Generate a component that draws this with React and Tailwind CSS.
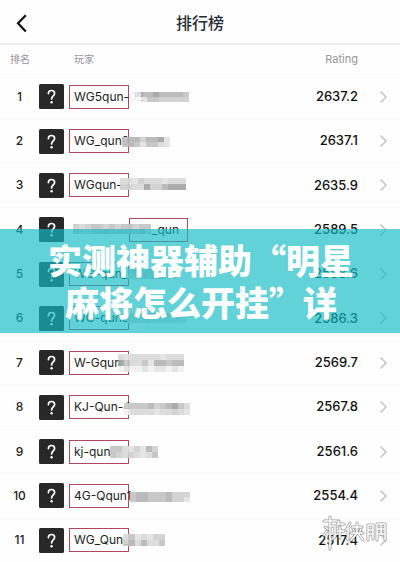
import React from "react";

// mosaic: offset inside the player column, block height h, then one string of
// shades per line of blocks (index into SHADES)
const PLAYERS = [
  { rank: 1, name: "WG5qun-", tail: "02", rating: "2637.2", mosaic: { x: 60, y: 7, h: 5, rows: ["7155655554", "7714433333"] } },
  { rank: 2, name: "WG_qun9", rating: "2637.1", mosaic: { x: 53, y: 8, h: 5, rows: ["45535561", "45414421"] } },
  { rank: 3, name: "WGqun-", rating: "2635.9", mosaic: { x: 51, y: 5, h: 6, rows: ["22132221222", "33226335666"] } },
  { rank: 4, name: "_qun", before: true, rating: "2589.5", mosaic: { x: 4, y: 6, h: 5, rows: ["3234434344344", "4334454444453"] } },
  { rank: 5, name: "WG-qun_", rating: "2588.6", mosaic: { x: 59, y: 7, h: 5, rows: ["34343531", "23434321"] } },
  { rank: 6, name: "WG-qun5", rating: "2586.3", mosaic: { x: 58, y: 7, h: 5, rows: ["3333333231", "2323222221"] } },
  { rank: 7, name: "W-Gqun", rating: "2569.7", mosaic: { x: 49, y: 3, h: 6, rows: ["21222221222", "64224155455", "01001011010"] } },
  { rank: 8, name: "KJ-Qun-4", rating: "2567.8", mosaic: { x: 55, y: 8, h: 6, rows: ["34445345642", "02222122321"] } },
  { rank: 9, name: "kj-qun", rating: "2561.6", mosaic: { x: 41, y: 6, h: 6, rows: ["44213153", "43232124"] } },
  { rank: 10, name: "4G-Qqun1", rating: "2554.4", mosaic: { x: 61, y: 8, h: 5, rows: ["4554445333", "4554445331"] } },
  { rank: 11, name: "WG_Qun_", rating: "2517.4", mosaic: { x: 54, y: 6, h: 6, rows: ["2412133", "3525224"] } },
];

const SHADES = ["#f1f1f1", "#e3e3e3", "#d9d9d9", "#cfcfcf", "#c3c3c3", "#b4b4b4", "#a3a3a3", "#fefefe"];

function Mosaic({ x, y, h, rows }) {
  return (
    <svg
      className="absolute opacity-90"
      style={{ left: x, top: y }}
      width={rows[0].length * 6}
      height={rows.length * h}
      shapeRendering="crispEdges"
      aria-hidden="true"
    >
      {rows.map((line, r) =>
        line.split("").map((s, c) => (
          <rect key={`${r}-${c}`} x={c * 6} y={r * h} width="6" height={h} fill={SHADES[s]} />
        ))
      )}
    </svg>
  );
}

function Avatar() {
  return (
    <svg className="block w-[25px] h-[25px] shrink-0" viewBox="0 0 25 25" aria-hidden="true">
      <rect width="25" height="25" rx="1.5" fill="#282828" />
      <path
        d="M9.4 9.6C9.4 7.6 10.7 6.5 12.5 6.5C14.4 6.5 15.6 7.7 15.6 9.4C15.6 11.8 12.6 12 12.6 15"
        fill="none" stroke="#fff" strokeWidth="1.7" strokeLinecap="round"
      />
      <circle cx="12.6" cy="18.3" r="1.2" fill="#fff" />
    </svg>
  );
}

function PlayerRow({ rank, name, tail, before, rating, mosaic }) {
  return (
    <li className="flex items-center border-b border-[#f8f8f8]">
      <span className="w-[39px] text-center text-[12px] font-medium">{rank}</span>
      <Avatar />
      <div className="relative flex-1 ml-[5px] h-6">
        {before ? (
          <div className="ml-[60px] w-[59px] h-6 pl-[22px] border border-[#b0485c] text-[12px] leading-[22px]">{name}</div>
        ) : (
          <div className="w-[60px] h-6 pl-1 border border-[#b0485c] text-[12px] leading-[22px] whitespace-nowrap">{name}{tail}</div>
        )}
        <Mosaic {...mosaic} />
      </div>
      <span className="text-[13px] font-medium text-[#111]">{rating}</span>
      <a href="#" aria-label={name} className="ml-[21px] mr-3">
        <svg className="block" width="9" height="14" viewBox="0 0 9 14" fill="none" stroke="#c4c4c6" strokeWidth="1.5">
          <path d="M1.5 1.5L7 7L1.5 12.5" />
        </svg>
      </a>
    </li>
  );
}

function Watermark() {
  return (
    <svg className="absolute right-3 bottom-3" width="68" height="38" viewBox="0 0 68 38" fill="none" strokeLinecap="round" strokeLinejoin="round" aria-hidden="true">
      {["#999", "#fff"].map((color, i) => (
        <g key={color} stroke={color} strokeWidth={i ? 1.5 : 3}>
          <path d="M10 4V36M4 8H17M5 14L8 16M4 22L7 18M10 13H15V24L12 26M19 8L17 13M18 11H24M20 14V25M17 18H24" />
          <path d="M30 10L26 17M28 15V27M32 14H42M37 10V19M33 16L34 18M41 16L40 18M31 20H43M37 20L31 27M38 20L43 27" />
          <path d="M48 12V27M48 12H53V26M48 17H53M48 21H53M57 11V27M57 11H65V27M57 16H65M57 21H65M61 11V21" />
        </g>
      ))}
    </svg>
  );
}

export default function App() {
  return (
    <div className="relative overflow-hidden bg-[#fefefe] text-[#222] font-['Inter','Noto_Sans_CJK_SC',sans-serif]">
      <header className="relative h-[45px] flex items-center justify-center border-b-2 border-[#efeff0]">
        <button aria-label="返回" className="absolute left-4 top-3.5">
          <svg className="block" width="11" height="19" viewBox="0 0 11 19" fill="none" stroke="#111" strokeWidth="2.2">
            <path d="M9.8 1.2L2 9.3L9.8 17.6" />
          </svg>
        </button>
        <h1 className="pt-0.5 text-[16px] font-medium text-[#252c36]">排行榜</h1>
      </header>

      <div className="flex items-center h-[30px] pl-2.5 pr-[42px] text-[#96969a] text-[10px] border-b border-[#f8f8f8]">
        <span className="w-16">排名</span>
        <span className="flex-1">玩家</span>
        <span className="text-[11px]">Rating</span>
      </div>

      <ul className="grid auto-rows-fr min-h-[488px]">
        {PLAYERS.map((p) => (
          <PlayerRow key={p.rank} {...p} />
        ))}
      </ul>

      <div className="absolute inset-x-0 top-[229px] pt-2.5 pb-2.5 pl-0.5 bg-[#12bcc5]/67 text-white text-center text-[34px] leading-[42px] font-black font-['Noto_Sans_CJK_SC',sans-serif]">
        <p>实测神器辅助“明星</p>
        <p>麻将怎么开挂”详</p>
      </div>

      <Watermark />
    </div>
  );
}
